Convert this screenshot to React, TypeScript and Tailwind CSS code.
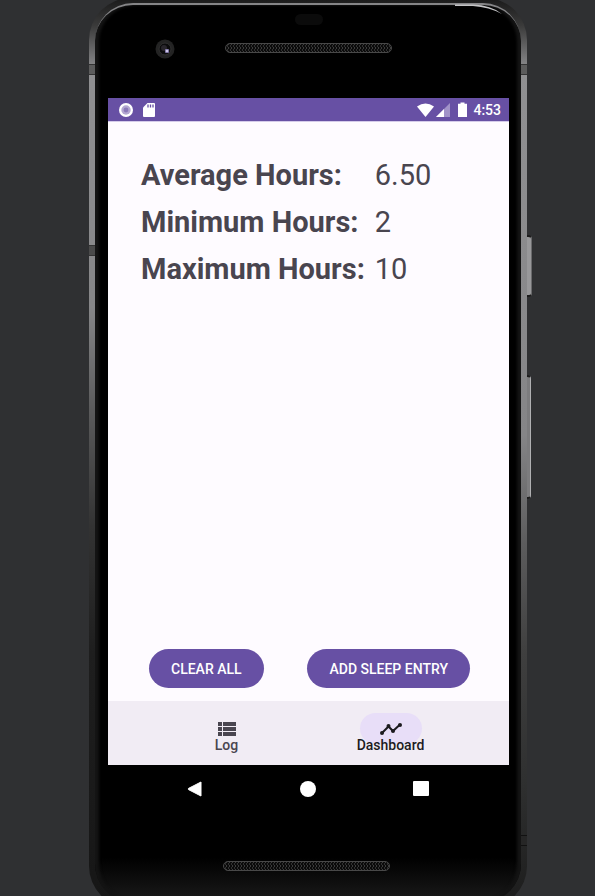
import React from "react";

const stats = [
  { label: "Average Hours:", value: "6.50" },
  { label: "Minimum Hours:", value: "2" },
  { label: "Maximum Hours:", value: "10" },
];

function SpeakerGrille() {
  return (
    <svg className="block h-[10px] w-full" aria-hidden="true">
      <defs>
        <pattern id="mesh" width="3" height="4" patternUnits="userSpaceOnUse">
          <rect width="3" height="4" fill="#0b0b0b" />
          <rect x="0" y="0" width="1" height="2" fill="#3c3c3c" />
          <rect x="2" y="2" width="1" height="2" fill="#303030" />
        </pattern>
      </defs>
      <rect x="0.5" y="0.5" width="166" height="9" rx="4.5" fill="url(#mesh)" stroke="#484848" />
    </svg>
  );
}

function FrontCamera() {
  return (
    <svg className="absolute left-[66px] top-[41px] h-5 w-5" viewBox="0 0 20 20" aria-hidden="true">
      <circle cx="10" cy="10" r="9.5" fill="#232323" />
      <circle cx="10" cy="10" r="6" fill="#0c0c0d" stroke="#303030" />
      <circle cx="9" cy="9" r="3" fill="#29262c" />
      <rect x="10" y="10" width="4" height="4" rx="1" fill="#8279a8" />
      <rect x="11" y="11" width="2" height="2" fill="#cfc8ea" />
    </svg>
  );
}

function StatusBar() {
  return (
    <div className="flex h-6 shrink-0 items-center justify-between border-b border-[#d5cbea] bg-[#6750a4] pl-[10px] pr-2 text-white">
      <div className="flex items-center gap-[9px]">
        <svg className="h-4 w-4" viewBox="0 0 16 16" aria-hidden="true">
          <circle cx="8" cy="8" r="7" fill="#fff" />
          <circle cx="8" cy="8" r="4.7" fill="#b3a7d1" />
          <circle cx="8" cy="8" r="2.4" fill="#8b79b9" />
        </svg>
        <svg className="h-4 w-3" viewBox="0 0 12 16" aria-hidden="true">
          <path d="M4.5 1H11a1 1 0 0 1 1 1v12a1 1 0 0 1-1 1H1a1 1 0 0 1-1-1V5.5Z" fill="#fff" />
          <path d="M5 2.5v3M7.5 2.5v3M10 2.5v3" stroke="#6750a4" strokeWidth="1.3" />
        </svg>
      </div>
      <div className="flex items-center">
        <svg className="h-4 w-[17px]" viewBox="0 0 17 16" aria-hidden="true">
          <path d="M0 4.500Q8.500-1.500 17 4.500L8.500 15Z" fill="#fff" />
        </svg>
        <svg className="ml-0.5 h-4 w-[14px]" viewBox="0 0 14 16" aria-hidden="true">
          <path d="M14 1v14H0Z" fill="#a193c8" />
          <path d="M8 7v8H0Z" fill="#fff" />
        </svg>
        <svg className="ml-2 h-4 w-[9px]" viewBox="0 0 9 16" aria-hidden="true">
          <path d="M2.500 0.500h4v1.200H9V15H0V1.700h2.500Z" fill="#fff" />
        </svg>
        <span className="ml-1.5 text-sm font-medium leading-5">4:53</span>
      </div>
    </div>
  );
}

function StatsTable() {
  return (
    <table className="ml-[33px] mt-[30px] self-start border-collapse text-left text-[29px] leading-[47px] text-[#49454f]">
      <tbody>
        {stats.map((s) => (
          <tr key={s.label}>
            <th scope="row" className="p-0 pr-2.5 font-bold">{s.label}</th>
            <td className="p-0">{s.value}</td>
          </tr>
        ))}
      </tbody>
    </table>
  );
}

function Actions() {
  const style = "h-[39px] rounded-full bg-[#6750a4] px-[22px] text-sm font-medium text-white";
  return (
    <div className="mb-[13px] mt-auto flex justify-between pl-[41px] pr-[39px]">
      <button type="button" className={style}>CLEAR ALL</button>
      <button type="button" className={style}>ADD SLEEP ENTRY</button>
    </div>
  );
}

function BottomNav() {
  return (
    <nav className="flex h-16 shrink-0 justify-center gap-[30px] bg-[#f1ecf4] pt-3 text-sm font-medium leading-[14px]">
      <a href="#log" className="flex w-[134px] flex-col items-center text-[#49454f]">
        <span className="flex h-[31px] w-[62px] items-center justify-center">
          <svg className="h-[14px] w-[18px]" viewBox="0 0 18 14" fill="currentColor" aria-hidden="true">
            <path d="M0 0h4v4H0zM5 0h13v4H5zM0 5h4v4H0zM5 5h13v4H5zM0 10h4v4H0zM5 10h13v4H5z" />
          </svg>
        </span>
        <span className="-mt-2 py-0.5">Log</span>
      </a>
      <a href="#dashboard" aria-current="page" className="flex w-[134px] flex-col items-center text-[#1c1b1f]">
        <span className="flex h-[31px] w-[62px] items-center justify-center rounded-full bg-[#e8def8]">
          <svg className="h-3 w-[22px]" viewBox="0 0 22 12" fill="none" stroke="currentColor" strokeWidth="2" aria-hidden="true">
            <path d="M2 10 8.500 3.500 13 8 19.500 2" />
            <g fill="currentColor" stroke="none">
              <circle cx="2" cy="10" r="2" />
              <circle cx="8.500" cy="3" r="2" />
              <circle cx="13" cy="8" r="2" />
              <circle cx="20" cy="2" r="2" />
            </g>
          </svg>
        </span>
        <span className="-mt-2 py-0.5">Dashboard</span>
      </a>
    </nav>
  );
}

function SystemNav() {
  return (
    <div className="flex h-[47px] shrink-0 items-center justify-center gap-[97px] pr-px">
      <button type="button" aria-label="Back" className="h-4 w-4">
        <svg viewBox="0 0 16 16" aria-hidden="true">
          <path d="M14 1v14L1.500 8.600q-.8-.6 0-1.200Z" fill="#fff" stroke="#fff" strokeLinejoin="round" />
        </svg>
      </button>
      <button type="button" aria-label="Home" className="h-4 w-4 rounded-full bg-white" />
      <button type="button" aria-label="Recent apps" className="h-[15px] w-4 rounded-[1px] bg-white" />
    </div>
  );
}

export default function App() {
  return (
    <main className="h-screen overflow-hidden bg-[#2f3032] pl-[89px] pr-[68px] font-[Roboto,sans-serif]">
      <div className="relative -mt-0.5 flex h-[calc(100vh+14px)] flex-col rounded-[42px] bg-[linear-gradient(#1a1a1a,#3a3a3a_3%,#909092_8%,#868688_34%,#5c5c5d_45%,#333_58%,#1e1e1e_72%,#161616),linear-gradient(#1a1a1a,#3a3a3a_3%,#909092_8%,#858587_48%,#5c5c5d_60%,#3f3f3f_72%,#2f3030_86%,#1c1c1c)] bg-[length:50%_100%] bg-[position:left,right] bg-no-repeat px-1.5 pb-1.5 pt-[5px]">
        <span className="absolute left-full top-[237px] h-[62px] w-[5px] rounded-r-sm border-y-2 border-r border-y-[#1c1c1c] border-r-[#6a6a6c] bg-[#98989a]" />
        <span className="absolute left-full top-[377px] h-[124px] w-1 rounded-r-sm border-y-2 border-r border-y-[#1c1c1c] border-r-[#b0b0b2] bg-[#7c7c7e]" />
        <span className="absolute left-0 top-[66px] h-[11px] w-1.5 border-y border-[#333] bg-[#5c5c5c]" />
        <span className="absolute right-0 top-[66px] h-[11px] w-1.5 border-y border-[#333] bg-[#5c5c5c]" />
        <span className="absolute left-0 top-[247px] h-[11px] w-1.5 border-y border-[#333] bg-[#4a4a4a]" />
        <span className="absolute right-0 top-[837px] h-[11px] w-1.5 border-y border-[#111] bg-[#262626]" />
        <svg className="absolute right-6 top-[5px] h-3 w-12" viewBox="0 0 48 12" fill="none" aria-hidden="true">
          <path d="M0 1.500H18Q36 2 47 11Q34 4 18 3H0Z" fill="#c4c4c6" />
        </svg>

        <div className="flex flex-1 flex-col rounded-[38px] border-t-2 border-[#858587] bg-[linear-gradient(#000_95%,#1a1a1a)] pl-[13px] pr-3 shadow-[inset_4px_0_3px_#141414,inset_-4px_0_3px_#141414]">
          <div className="flex h-[93px] shrink-0 flex-col items-center">
            <span className="mt-[9px] h-[11px] w-7 rounded-full bg-[#0b0b0b]" />
            <FrontCamera />
            <div className="mt-[18px] w-[167px]"><SpeakerGrille /></div>
          </div>

          <section className="flex flex-1 flex-col bg-[#fefbff]">
            <StatusBar />
            <StatsTable />
            <Actions />
            <BottomNav />
          </section>

          <SystemNav />
          <div className="flex h-[90px] shrink-0 justify-center pr-[5px] pt-[49px]">
            <div className="w-[167px]"><SpeakerGrille /></div>
          </div>
        </div>
      </div>
    </main>
  );
}
